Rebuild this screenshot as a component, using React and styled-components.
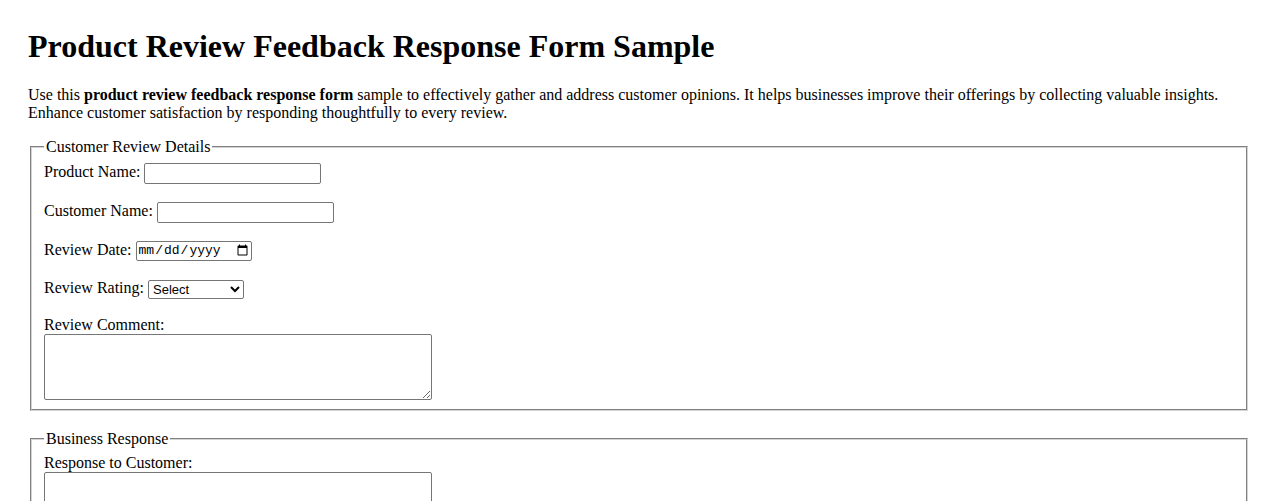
import styled, { createGlobalStyle } from "styled-components";

const GlobalStyle = createGlobalStyle`
    body {
        margin: 8px;
        padding: 20px;
        font-family: "Liberation Serif", "Times New Roman", serif;
        font-size: 16px;
        color: #000000;
        background-color: #FFFFFF;
    }
`;

const Title = styled.h1`
    font-size: 32px;
    font-weight: bold;
    margin: 0 0 21px 0;
`;

const Intro = styled.p`
    margin: 0 0 16px 0;
    line-height: 18px;
`;

const Fieldset = styled.fieldset`
    border: 2px groove #D4D4D4;
    margin: 0 2px 19px 2px;
    padding: ${(props) => props.$top ?? 5}px 12px 9px 12px;
`;

const Legend = styled.legend`
    padding: 0 2px;
`;

const Field = styled.div`
    margin-bottom: ${(props) => props.$gap ?? 16}px;
    line-height: 21px;

    &:last-child {
        margin-bottom: 0;
    }
`;

const Label = styled.label`
    margin-right: 4px;
`;

const BlockLabel = styled.label`
    display: block;
    line-height: 18px;
`;

const TextInput = styled.input`
    box-sizing: border-box;
    width: 177px;
    height: 21px;
    border: 1px solid #767676;
    border-radius: 2px;
    vertical-align: middle;
    font-family: "Liberation Sans", Arial, sans-serif;
    font-size: 13px;
`;

const DateInput = styled.input`
    box-sizing: border-box;
    width: 116px;
    height: 20px;
    border: 1px solid #767676;
    border-radius: 2px;
    vertical-align: middle;
    font-family: "Liberation Mono", monospace;
    font-size: 13px;
`;

const Select = styled.select`
    box-sizing: border-box;
    width: 96px;
    height: 19px;
    border: 1px solid #767676;
    border-radius: 2px;
    vertical-align: middle;
    font-family: "Liberation Sans", Arial, sans-serif;
    font-size: 13px;
    background: #FFFFFF;
`;

const TextArea = styled.textarea`
    display: block;
    box-sizing: border-box;
    width: 388px;
    height: 66px;
    border: 1px solid #767676;
    border-radius: 2px;
    font-family: "Liberation Mono", monospace;
    font-size: 13px;
`;

export default function App() {
    return (
        <>
            <GlobalStyle />
            <Title>Product Review Feedback Response Form Sample</Title>
            <Intro>
                Use this <b>product review feedback response form</b> sample to effectively gather and address customer opinions. It helps businesses improve their offerings by collecting valuable insights. Enhance customer satisfaction by responding thoughtfully to every review.
            </Intro>
            <form>
                <Fieldset>
                    <Legend>Customer Review Details</Legend>
                    <Field>
                        <Label htmlFor="product">Product Name:</Label>
                        <TextInput id="product" type="text" />
                    </Field>
                    <Field>
                        <Label htmlFor="customer">Customer Name:</Label>
                        <TextInput id="customer" type="text" />
                    </Field>
                    <Field>
                        <Label htmlFor="date">Review Date:</Label>
                        <DateInput id="date" type="date" />
                    </Field>
                    <Field $gap={17}>
                        <Label htmlFor="rating">Review Rating:</Label>
                        <Select id="rating" defaultValue="">
                            <option value="">Select</option>
                            <option value="1">1</option>
                            <option value="2">2</option>
                            <option value="3">3</option>
                            <option value="4">4</option>
                            <option value="5">5</option>
                        </Select>
                    </Field>
                    <Field>
                        <BlockLabel htmlFor="comment">Review Comment:</BlockLabel>
                        <TextArea id="comment" />
                    </Field>
                </Fieldset>
                <Fieldset $top={6}>
                    <Legend>Business Response</Legend>
                    <Field>
                        <BlockLabel htmlFor="response">Response to Customer:</BlockLabel>
                        <TextArea id="response" />
                    </Field>
                </Fieldset>
            </form>
        </>
    );
}
